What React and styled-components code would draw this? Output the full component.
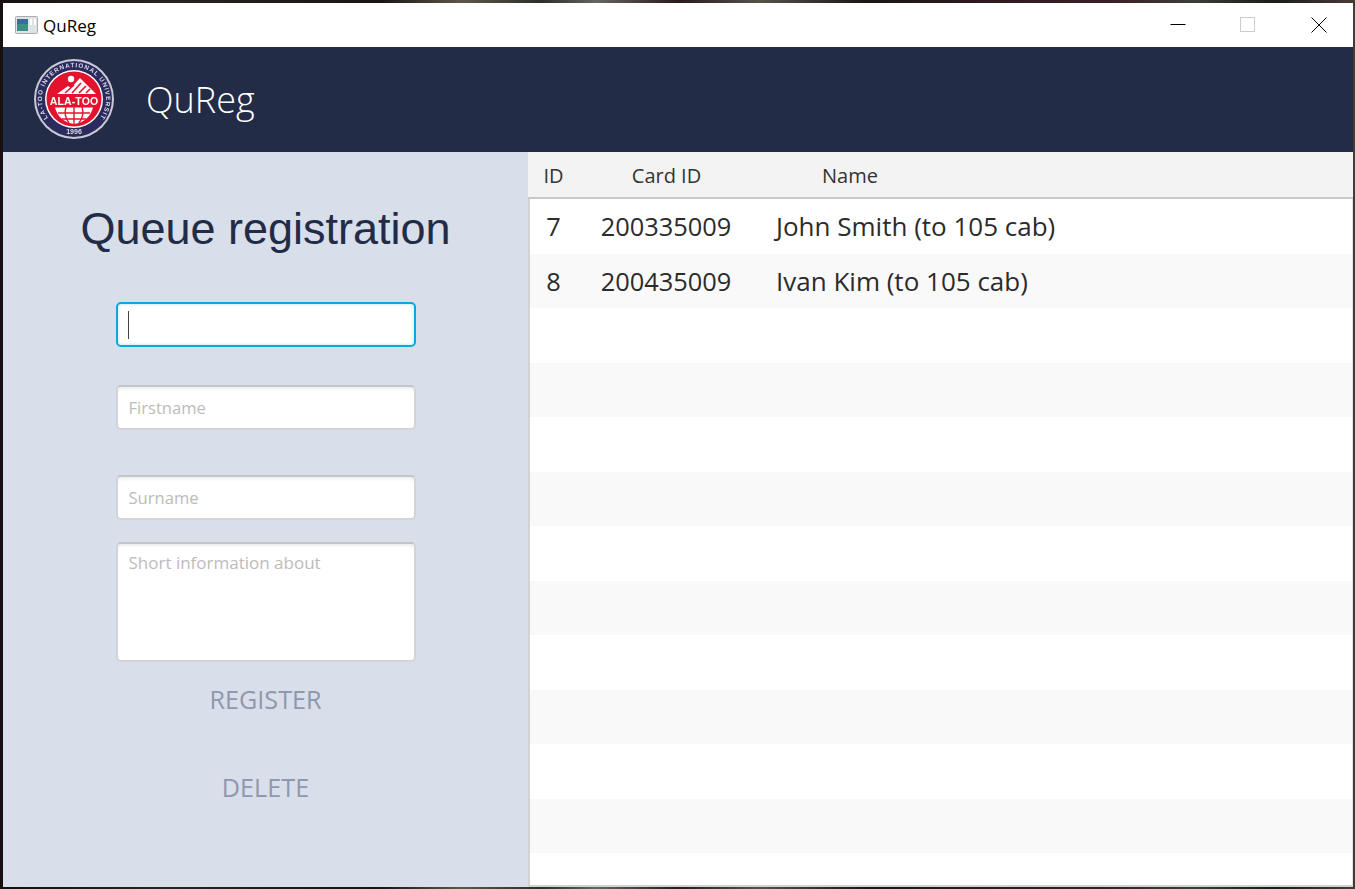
import React from "react";
import styled, { createGlobalStyle } from "styled-components";

const Global = createGlobalStyle`
  html, body { margin: 0; padding: 0; width: 1355px; height: 889px; overflow: hidden; }
  body {
    background: linear-gradient(90deg, #161010 0, #2a2320 12%, #1a1412 28%, #5e5648 34%, #2e2e2a 40%, #66665e 44%, #2a1a1c 50%, #55524a 56%, #1a1614 64%, #2e1a1e 72%, #3a2026 82%, #3e3e36 88%, #1c1c18 94%, #4a3a36 100%);
  }
  * { box-sizing: border-box; }
`;

const Frame = styled.div`
  width: 1350px;
  height: 884px;
  margin: 3px 0 0 3px;
  display: flex;
  flex-direction: column;
  background: #fff;
`;

const TitleBar = styled.div`
  height: 44px;
  flex: none;
  display: flex;
  align-items: center;
  background: #fff;
  padding-left: 12px;
  font: 17px "Open Sans", "Noto Sans", sans-serif;
  color: #000;
`;

const AppIcon = styled.svg`
  width: 23px;
  height: 18px;
  margin-right: 5px;
`;

const TitleText = styled.span`
  flex: 1;
`;

const WinButtons = styled.div`
  display: flex;
  height: 100%;
`;

const WinButton = styled.div`
  width: 70px;
  padding-left: ${(p) => p.$nudge || 0}px;
  display: flex;
  align-items: center;
  justify-content: center;
`;

const Header = styled.header`
  height: 105px;
  flex: none;
  display: flex;
  align-items: center;
  padding-left: 30px;
  background: #222c47;
`;

const LogoSvg = styled.svg`
  width: 82px;
  height: 82px;
  flex: none;
  margin-bottom: 1px;
  filter: blur(0.35px);
`;

const AppName = styled.h1`
  margin: 0 0 0 31px;
  font: 350 36px "Open Sans", "Noto Sans", sans-serif;
  color: #fff;
`;

const Body = styled.div`
  flex: 1;
  display: flex;
  min-height: 0;
`;

const Side = styled.aside`
  width: 525px;
  flex: none;
  display: flex;
  flex-direction: column;
  align-items: center;
  background: #d8deea;
`;

const Heading = styled.h2`
  margin: 52px 0 48px;
  height: 50px;
  font: 400 45px/50px "Liberation Sans", Arial, sans-serif;
  color: #222c47;
`;

const Field = styled.div`
  width: 300px;
  height: ${(p) => (p.$tall ? 120 : 45)}px;
  margin-bottom: ${(p) => p.$gap}px;
  padding: ${(p) => (p.$tall ? "7px 11px" : "0 11px")};
  display: flex;
  align-items: ${(p) => (p.$tall ? "flex-start" : "center")};
  background: #fff;
  border-radius: 5px;
  border: 2px solid ${(p) => (p.$focus ? "#0aa8de" : "#d2d4d8")};
  border-top-color: ${(p) => (p.$focus ? "#0aa8de" : "#c4c5c8")};
  box-shadow: ${(p) =>
    p.$focus ? "inset 0 0 3px 1px #d3eef9" : "inset 0 4px 4px -3px #e4e4e4"};
  font: ${(p) => (p.$tall ? 17 : 16.6)}px/24px "Open Sans", "Noto Sans", sans-serif;
  color: #bdbbbb;
`;

const Caret = styled.div`
  width: 1.5px;
  height: 28px;
  background: #444;
  margin-left: -1px;
`;

const ActionButton = styled.div`
  height: ${(p) => p.$h}px;
  margin-top: ${(p) => p.$top}px;
  font: 25.2px/36px "Open Sans", "Noto Sans", sans-serif;
  color: #8f99ad;
  text-align: center;
`;

const TableArea = styled.main`
  flex: 1;
  display: flex;
  flex-direction: column;
  min-width: 0;
  background: #fff;
`;

const HeadRow = styled.div`
  height: 47px;
  flex: none;
  display: flex;
  align-items: center;
  padding-top: 2px;
  background: #f3f3f3;
  border-bottom: 2px solid #c8c8c8;
  font: 20px "Open Sans", "Noto Sans", sans-serif;
  color: #333;
`;

const HeadCell = styled.div`
  width: ${(p) => p.$w}px;
  text-align: center;
  flex: none;
`;

const Rows = styled.div`
  flex: 1;
  background: #fff;
  border-left: 2px solid #d2d2d2;
  border-right: 1px solid #e0e0e0;
  border-bottom: 2px solid #d2d2d2;
  overflow: hidden;
`;

const Row = styled.div`
  height: 54.5px;
  display: flex;
  align-items: center;
  background: ${(p) => (p.$odd ? "#f9f9f9" : "#fff")};
  font: 25.4px "Open Sans", "Noto Sans", sans-serif;
  color: #2b2b2b;
`;

const Cell = styled.div`
  width: ${(p) => p.$w}px;
  text-align: center;
  flex: none;
`;

const NameCell = styled.div`
  padding-left: 21px;
  font-size: 26px;
`;

const Logo = () => (
  <LogoSvg viewBox="0 0 82 82">
    <defs>
      <path id="topArc" d="M 15.5 60.5 A 32 32 0 1 1 66.5 60.5" />
    </defs>
    <circle cx="41" cy="41" r="40" fill="#c9c9d6" />
    <circle cx="41" cy="41" r="38" fill="#2b2b5e" />
    <text fontFamily="Liberation Sans" fontSize="6.3" fontWeight="700" fill="#dcdce6" letterSpacing="0.95">
      <textPath href="#topArc" startOffset="50%" textAnchor="middle">ALA-TOO INTERNATIONAL UNIVERSITY</textPath>
    </text>
    <text x="41" y="76" textAnchor="middle" fontFamily="Liberation Sans" fontSize="7" fontWeight="700" fill="#dcdce6">1996</text>
    <circle cx="41" cy="41" r="29" fill="#fff" />
    <circle cx="41" cy="41" r="27.5" fill="#e3122d" />
    <circle cx="38" cy="21" r="3.2" fill="#fff" />
    <path d="M24 36 L35 28 L38 30 L47 20 L63 36 Z" fill="#fff" />
    <path d="M32 35 L41 27 M39 35 L48 25 M46 35 L53 28 M53 35 L57 31" stroke="#e3122d" strokeWidth="1.6" />
    <text x="41" y="46.5" textAnchor="middle" fontFamily="Liberation Sans" fontSize="10.5" fontWeight="700" fill="#fff" letterSpacing="0.1">ALA-TOO</text>
    <path d="M22 49.5 H60 C58 58 51 65 41 66 C31 65 24 58 22 49.5 Z" fill="#fff" />
    <path d="M41 49 V66 M33 49 C31 55 33 61 36 65 M49 49 C51 55 49 61 46 65 M25 55 H57 M29 61 H53" stroke="#e3122d" strokeWidth="1.4" fill="none" />
  </LogoSvg>
);

const rows = [
  ["7", "200335009", "John Smith (to 105 cab)"],
  ["8", "200435009", "Ivan Kim (to 105 cab)"],
];

export default function App() {
  return (
    <>
      <Global />
      <Frame>
        <TitleBar>
          <AppIcon viewBox="0 0 23 18">
            <rect x="0.5" y="0.5" width="22" height="17" rx="1" fill="#dfe3e6" stroke="#a9adb1" />
            <rect x="2" y="3" width="11" height="12" fill="#3f8f86" />
            <rect x="2" y="3" width="11" height="5" fill="#3c6c9c" />
            <rect x="15" y="3" width="2" height="6" fill="#fff" />
            <rect x="19" y="3" width="2" height="6" fill="#fff" />
          </AppIcon>
          <TitleText>QuReg</TitleText>
          <WinButtons>
            <WinButton>
              <svg width="16" height="16" viewBox="0 0 16 16"><path d="M0.5 7.5 H15.5" stroke="#000" /></svg>
            </WinButton>
            <WinButton>
              <svg width="16" height="16" viewBox="0 0 16 16"><rect x="0.5" y="0.5" width="14" height="14" fill="none" stroke="#ccc" /></svg>
            </WinButton>
            <WinButton $nudge={2}>
              <svg width="16" height="16" viewBox="0 0 16 16"><path d="M0.5 0.5 L15.5 15.5 M15.5 0.5 L0.5 15.5" stroke="#000" /></svg>
            </WinButton>
          </WinButtons>
        </TitleBar>
        <Header>
          <Logo />
          <AppName>QuReg</AppName>
        </Header>
        <Body>
          <Side>
            <Heading>Queue registration</Heading>
            <Field $focus $gap={38}><Caret /></Field>
            <Field $gap={45}>Firstname</Field>
            <Field $gap={22}>Surname</Field>
            <Field $tall $gap={0}>Short information about</Field>
            <ActionButton $top={19} $h={36}>REGISTER</ActionButton>
            <ActionButton $top={52} $h={36}>DELETE</ActionButton>
          </Side>
          <TableArea>
            <HeadRow>
              <HeadCell $w={51}>ID</HeadCell>
              <HeadCell $w={175}>Card ID</HeadCell>
              <HeadCell $w={192}>Name</HeadCell>
            </HeadRow>
            <Rows>
              {Array.from({ length: 13 }).map((_, i) => (
                <Row key={i} $odd={i % 2 === 1}>
                  {rows[i] && (
                    <>
                      <Cell $w={47}>{rows[i][0]}</Cell>
                      <Cell $w={178}>{rows[i][1]}</Cell>
                      <NameCell>{rows[i][2]}</NameCell>
                    </>
                  )}
                </Row>
              ))}
            </Rows>
          </TableArea>
        </Body>
      </Frame>
    </>
  );
}
